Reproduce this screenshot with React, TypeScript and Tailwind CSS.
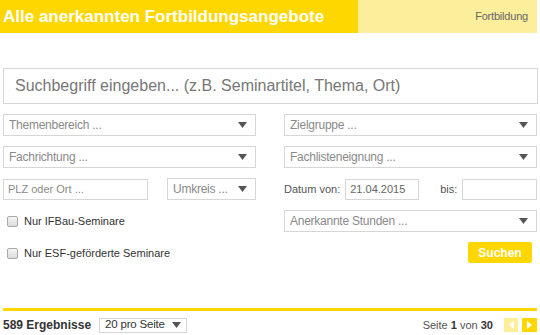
import React from "react";

const Arrow = () => (
  <svg width="9" height="6" viewBox="0 0 9 6" className="shrink-0">
    <polygon points="0,0 9,0 4.5,6" fill="#555" />
  </svg>
);

const Select = ({ label, className = "" }: { label: string; className?: string }) => (
  <div
    className={`h-[22px] border border-[#d6d6d6] bg-white flex items-center justify-between pl-[5px] pr-[8px] text-[12px] tracking-[-0.25px] text-[#8a8a8a] ${className}`}
  >
    <span>{label}</span>
    <Arrow />
  </div>
);

const Checkbox = ({ label }: { label: string }) => (
  <div className="h-[22px] flex items-center gap-[6px] pl-[4px]">
    <div className="w-[11px] h-[11px] rounded-[2px] border border-[#a9a9a9] bg-gradient-to-b from-[#f5f5f5] to-[#dcdcdc]" />
    <span className="text-[11px] text-[#333]">{label}</span>
  </div>
);

export default function App() {
  return (
    <div className="w-[540px] h-[335px] bg-white overflow-hidden" style={{ fontFamily: '"Liberation Sans", Arial, sans-serif' }}>
      <div className="flex h-[33px] mr-[3px]">
        <div className="w-[358px] bg-[#ffd700] flex items-center pl-[3px]">
          <span className="text-[17px] font-bold text-white">Alle anerkannten Fortbildungsangebote</span>
        </div>
        <div className="flex-1 bg-[#fdee9c] flex items-center justify-end pr-[9px]">
          <span className="text-[11px] tracking-[-0.2px] text-[#666]">Fortbildung</span>
        </div>
      </div>

      <div className="px-[3px] pr-[2px]">
        <div className="mt-[35px] h-[36px] border border-[#d6d6d6] flex items-center pl-[11px] text-[16px] text-[#777]">
          Suchbegriff eingeben... (z.B. Seminartitel, Thema, Ort)
        </div>

        <div className="mt-[10px] grid grid-cols-[253px_253px] gap-x-[28px] gap-y-[10px] w-[534px]">
          <Select label="Themenbereich ..." />
          <Select label="Zielgruppe ..." />
          <Select label="Fachrichtung ..." />
          <Select label="Fachlisteneignung ..." />

          <div className="flex items-center justify-between">
            <div className="w-[145px] h-[21px] border border-[#d6d6d6] flex items-center pl-[4px] text-[11px] text-[#8a8a8a]">
              PLZ oder Ort ...
            </div>
            <Select label="Umkreis ..." className="w-[89px] h-[21px]" />
          </div>
          <div className="flex items-center text-[11px]">
            <span className="text-[#555]">Datum von:</span>
            <div className="ml-[5px] w-[74px] h-[21px] border border-[#d6d6d6] flex items-center pl-[4px] text-[#666]">
              21.04.2015
            </div>
            <span className="ml-[21px] text-[#555]">bis:</span>
            <div className="ml-[5px] flex-1 h-[21px] border border-[#d6d6d6]" />
          </div>

          <Checkbox label="Nur IFBau-Seminare" />
          <Select label="Anerkannte Stunden ..." />

          <Checkbox label="Nur ESF-geförderte Seminare" />
          <div className="flex justify-end pr-[5px]">
            <div className="w-[64px] h-[21px] bg-[#ffd700] rounded-[2px] flex items-center justify-center text-[12px] font-bold text-white">
              Suchen
            </div>
          </div>
        </div>

        <div className="mt-[44px] h-[3px] bg-[#ffd700] w-[534px]" />

        <div className="mt-[5px] flex items-center justify-between w-[534px]">
          <div className="flex items-center">
            <span className="text-[12px] font-bold text-[#333]">589 Ergebnisse</span>
            <div className="ml-[8px] w-[88px] h-[15px] border border-[#d6d6d6] flex items-center justify-between pl-[5px] pr-[5px] text-[11.5px] tracking-[-0.2px] text-[#333]">
              <span>20 pro Seite</span>
              <Arrow />
            </div>
          </div>
          <div className="flex items-center">
            <span className="text-[11px] text-[#555]">
              Seite <b className="text-[#333]">1</b> von <b className="text-[#333]">30</b>
            </span>
            <div className="ml-[11px] w-[14px] h-[14px] bg-[#fdee9c] flex items-center justify-center">
              <svg width="5" height="8" viewBox="0 0 5 8"><polygon points="5,0 5,8 0,4" fill="#fff" /></svg>
            </div>
            <div className="ml-[4px] w-[15px] h-[14px] bg-[#ffd700] flex items-center justify-center">
              <svg width="5" height="8" viewBox="0 0 5 8"><polygon points="0,0 0,8 5,4" fill="#fff" /></svg>
            </div>
          </div>
        </div>
      </div>
    </div>
  );
}
